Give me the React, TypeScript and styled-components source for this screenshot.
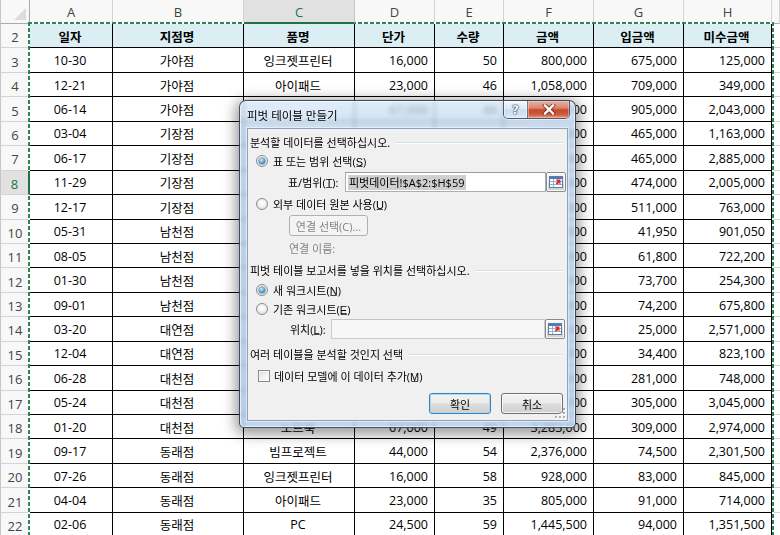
import React from "react";
import styled, { createGlobalStyle } from "styled-components";

const GlobalStyle = createGlobalStyle`
  html, body { margin: 0; padding: 0; background: #fff; }
  body {
    width: 780px; height: 535px; overflow: hidden;
    font-family: "Open Sans", "Noto Sans CJK KR", sans-serif;
  }
`;

const COLS = [30, 83, 131, 111, 80, 69, 90, 90, 88, 8];
const LETTERS = ["A", "B", "C", "D", "E", "F", "G", "H", ""];
const HEAD = ["일자", "지점명", "품명", "단가", "수량", "금액", "입금액", "미수금액"];
const ROWS: string[][] = [
  ["10-30", "가야점", "잉크젯프린터", "16,000", "50", "800,000", "675,000", "125,000"],
  ["12-21", "가야점", "아이패드", "23,000", "46", "1,058,000", "709,000", "349,000"],
  ["06-14", "가야점", "노트북", "67,000", "44", "2,948,000", "905,000", "2,043,000"],
  ["03-04", "기장점", "빔프로젝트", "44,000", "37", "1,628,000", "465,000", "1,163,000"],
  ["06-17", "기장점", "노트북", "67,000", "50", "3,350,000", "465,000", "2,885,000"],
  ["11-29", "기장점", "노트북", "67,000", "37", "2,479,000", "474,000", "2,005,000"],
  ["12-17", "기장점", "PC", "24,500", "52", "1,274,000", "511,000", "763,000"],
  ["05-31", "남천점", "아이패드", "23,000", "41", "943,000", "41,950", "901,050"],
  ["08-05", "남천점", "잉크젯프린터", "16,000", "49", "784,000", "61,800", "722,200"],
  ["01-30", "남천점", "마우스", "8,000", "41", "328,000", "73,700", "254,300"],
  ["09-01", "남천점", "키보드", "15,000", "50", "750,000", "74,200", "675,800"],
  ["03-20", "대연점", "빔프로젝트", "44,000", "59", "2,596,000", "25,000", "2,571,000"],
  ["12-04", "대연점", "PC", "24,500", "35", "857,500", "34,400", "823,100"],
  ["06-28", "대천점", "PC", "24,500", "42", "1,029,000", "281,000", "748,000"],
  ["05-24", "대천점", "노트북", "67,000", "50", "3,350,000", "305,000", "3,045,000"],
  ["01-20", "대천점", "노트북", "67,000", "49", "3,283,000", "309,000", "2,974,000"],
  ["09-17", "동래점", "빔프로젝트", "44,000", "54", "2,376,000", "74,500", "2,301,500"],
  ["07-26", "동래점", "잉크젯프린터", "16,000", "58", "928,000", "83,000", "845,000"],
  ["04-04", "동래점", "아이패드", "23,000", "35", "805,000", "91,000", "714,000"],
  ["02-06", "동래점", "PC", "24,500", "59", "1,445,500", "94,000", "1,351,500"],
];

/* cells that lie completely under the dialog's opaque panel are left blank */
const covered = (rowNum: number, ci: number) =>
  (rowNum >= 6 && rowNum <= 17 && ci >= 2 && ci <= 4) || (rowNum === 5 && ci === 2);

const GREEN = "#217346";
const U = "\u0332"; // combining low line: mnemonic underline inside one text run

/* ---------- sheet ---------- */
const Sheet = styled.div`
  position: relative;
  width: 780px;
  height: 535px;
  overflow: hidden;
  background: #fff;
`;

const Grid = styled.div`
  display: grid;
  grid-template-columns: ${COLS.map((c) => c + "px").join(" ")};
  grid-template-rows: 24px repeat(21, 24.45px);
`;

const Corner = styled.div`
  position: relative;
  box-sizing: border-box;
  background: #f8f8f8;
  border-right: 1px solid #ababab;
  border-bottom: 1px solid #ababab;
  border-left: 1px solid #c6c6c6;
  &::after {
    content: "";
    position: absolute;
    right: 3px;
    bottom: 3px;
    width: 0;
    height: 0;
    border-left: 12px solid transparent;
    border-bottom: 12px solid #dcdcdc;
  }
`;

const ColHead = styled.div<{ $sel?: boolean }>`
  position: relative;
  z-index: ${(p) => (p.$sel ? 3 : 0)};
  box-sizing: border-box;
  display: flex;
  align-items: center;
  justify-content: center;
  padding-top: 1px;
  background: ${(p) => (p.$sel ? "#e1e1e1" : "#f8f8f8")};
  color: ${(p) => (p.$sel ? GREEN : "#444")};
  border-right: 1px solid ${(p) => (p.$sel ? "#c6c6c6" : "#d4d4d4")};
  border-bottom: ${(p) => (p.$sel ? `2px solid ${GREEN}` : "1px solid #ababab")};
  font-size: 13px;
`;

const RowHead = styled.div<{ $sel?: boolean }>`
  position: relative;
  z-index: ${(p) => (p.$sel ? 3 : 0)};
  box-sizing: border-box;
  display: flex;
  align-items: center;
  justify-content: center;
  padding-top: 3px;
  background: ${(p) => (p.$sel ? "#e1e1e1" : "#f8f8f8")};
  color: ${(p) => (p.$sel ? GREEN : "#444")};
  border-left: 1px solid #c6c6c6;
  border-bottom: 1px solid #d4d4d4;
  border-right: ${(p) => (p.$sel ? `2px solid ${GREEN}` : "1px solid #ababab")};
  font-size: 13px;
`;

const Cell = styled.div<{ $align: "center" | "right"; $head?: boolean }>`
  box-sizing: border-box;
  display: flex;
  align-items: center;
  justify-content: ${(p) => (p.$align === "center" ? "center" : "flex-end")};
  padding: 1px 6px 0 4px;
  border-right: 1px solid #000;
  border-bottom: 1px solid #000;
  background: ${(p) => (p.$head ? "#daeef3" : "#fff")};
  font-weight: ${(p) => (p.$head ? 700 : 400)};
  font-size: 12.5px;
  color: #000;
  white-space: nowrap;
  overflow: hidden;
`;

const Spare = styled.div`
  box-sizing: border-box;
  border-bottom: 1px solid #d4d4d4;
`;

const Marquee = styled.div`
  position: absolute;
  left: 28px;
  top: 22px;
  width: 746px;
  height: 600px;
  z-index: 2;
  pointer-events: none;
  background:
    repeating-linear-gradient(90deg, #2f8354 0 4px, #ffffff 4px 6px) top left / 100% 2px no-repeat,
    repeating-linear-gradient(180deg, #2f8354 0 4px, #ffffff 4px 6px) top left / 2px 100% no-repeat,
    repeating-linear-gradient(180deg, #2f8354 0 4px, #ffffff 4px 6px) top right / 2px 100% no-repeat;
`;

/* ---------- dialog ---------- */
const Dialog = styled.div`
  position: absolute;
  left: 239px;
  top: 100px;
  width: 337px;
  height: 328px;
  z-index: 10;
  box-sizing: border-box;
  display: flex;
  flex-direction: column;
  padding: 0 7px 6px 7px;
  border: 1px solid rgba(25, 40, 60, 0.8);
  border-radius: 7px 7px 5px 5px;
  background: linear-gradient(
    180deg,
    rgba(212, 230, 248, 0.72) 0px,
    rgba(182, 208, 236, 0.7) 28px,
    rgba(176, 204, 234, 0.78) 100%
  );
  backdrop-filter: blur(2.5px);
  box-shadow: 0 3px 14px 3px rgba(0, 0, 0, 0.42), inset 0 0 0 1px rgba(255, 255, 255, 0.6);
  font-family: "Open Sans", "Noto Sans CJK KR", sans-serif;
  font-size: 11px;
  color: #000;
`;

const TitleBar = styled.div`
  height: 27px;
  display: flex;
  align-items: flex-start;
`;

const Title = styled.div`
  margin-top: 6px;
  line-height: 18px;
  font-size: 11.5px;
  color: #000;
  text-shadow: 0 0 6px rgba(255, 255, 255, 0.9);
`;

const Caption = styled.div`
  display: flex;
  margin-left: auto;
  margin-right: -2px;
  height: 18px;
  box-sizing: border-box;
  border: 1px solid rgba(35, 45, 65, 0.75);
  border-top: none;
  border-radius: 0 0 5px 5px;
  overflow: hidden;
  box-shadow: 0 1px 0 rgba(255, 255, 255, 0.55);
`;

const HelpBtn = styled.div`
  width: 24px;
  box-sizing: border-box;
  border-right: 1px solid rgba(35, 45, 65, 0.6);
  display: flex;
  align-items: center;
  justify-content: center;
  background: linear-gradient(
    180deg,
    rgba(255, 255, 255, 0.65) 0%,
    rgba(220, 232, 245, 0.55) 48%,
    rgba(190, 210, 232, 0.55) 52%,
    rgba(220, 235, 248, 0.7) 100%
  );
  box-shadow: inset 0 0 0 1px rgba(255, 255, 255, 0.5);
  color: #f6f9fc;
  font: bold 12px "DejaVu Sans", sans-serif;
  text-shadow: 0 0 1px #2a3a50, 0 0 1px #2a3a50, 0 0 2px #2a3a50;
`;

const CloseBtn = styled.div`
  width: 41px;
  display: flex;
  align-items: center;
  justify-content: center;
  background: linear-gradient(
    180deg,
    #eab0a2 0%,
    #d98571 42%,
    #c7472c 52%,
    #cf5a3e 78%,
    #e39a80 100%
  );
  box-shadow: inset 0 0 0 1px rgba(255, 220, 210, 0.45);
`;

const Body = styled.div`
  position: relative;
  flex: 1;
  box-sizing: border-box;
  display: flex;
  flex-direction: column;
  padding: 4px 4px 0 0;
  background: #f0f0f0;
  border: 1px solid #8ea3bb;
  box-shadow: 0 0 0 1px rgba(255, 255, 255, 0.45);
`;

const Section = styled.div<{ $h: number }>`
  height: ${(p) => p.$h}px;
  display: flex;
  align-items: center;
  gap: 5px;
  padding-left: 2px;
  white-space: nowrap;
  &::after {
    content: "";
    flex: 1;
    height: 1px;
    background: #d5dfe5;
    box-shadow: 0 1px 0 #fff;
  }
`;

const Line = styled.div<{ $h: number; $indent: number; $muted?: boolean }>`
  height: ${(p) => p.$h}px;
  display: flex;
  align-items: center;
  padding-left: ${(p) => p.$indent}px;
  white-space: nowrap;
  color: ${(p) => (p.$muted ? "#838383" : "#000")};
`;

const RadioMark = styled.span<{ $on?: boolean }>`
  position: relative;
  flex: none;
  width: 12px;
  height: 12px;
  margin-right: 5px;
  box-sizing: border-box;
  border-radius: 50%;
  border: 1px solid #8c8c8c;
  background: radial-gradient(circle at 50% 40%, #ffffff 0%, #f1f1f1 45%, #d6d6d6 100%);
  &::after {
    content: "";
    display: ${(p) => (p.$on ? "block" : "none")};
    position: absolute;
    left: 2px;
    top: 2px;
    width: 6px;
    height: 6px;
    border-radius: 50%;
    background: radial-gradient(circle at 40% 35%, #d6efff 0%, #61aee0 45%, #1c5a8c 100%);
    box-shadow: 0 0 0 0.5px #2d5f86;
  }
`;

const CheckMark = styled.span`
  flex: none;
  width: 12px;
  height: 12px;
  margin-right: 4px;
  box-sizing: border-box;
  border: 1px solid #8c8c8c;
  background: linear-gradient(135deg, #dcdcdc 0%, #f4f4f4 60%, #ffffff 100%);
  box-shadow: inset 0 0 0 1px #f6f6f6;
`;

const FieldLabel = styled.span<{ $w: number }>`
  width: ${(p) => p.$w}px;
  flex: none;
`;

const TextBox = styled.div<{ $w: number; $disabled?: boolean }>`
  width: ${(p) => p.$w}px;
  height: 20px;
  flex: none;
  box-sizing: border-box;
  display: flex;
  align-items: center;
  padding-left: 2px;
  border: 1px solid ${(p) => (p.$disabled ? "#c9ccd2" : "#abadb3")};
  border-top-color: ${(p) => (p.$disabled ? "#bfc2c8" : "#9a9ca3")};
  background: ${(p) => (p.$disabled ? "#f6f6f6" : "#fff")};
`;

const Selected = styled.span`
  background: #cfcfcf;
  line-height: 15px;
  padding: 0 1px;
`;

const PickBtn = styled.div`
  width: 20px;
  height: 20px;
  flex: none;
  box-sizing: border-box;
  display: flex;
  align-items: center;
  justify-content: center;
  border: 1px solid #8a8a8a;
  border-radius: 2px;
  background: linear-gradient(180deg, #f6f6f6 0%, #e9e9e9 50%, #dcdcdc 51%, #d2d2d2 100%);
  box-shadow: inset 0 0 0 1px rgba(255, 255, 255, 0.8);
`;

const PushBtn = styled.div<{ $w: number; $default?: boolean; $disabled?: boolean }>`
  width: ${(p) => p.$w}px;
  height: 21px;
  flex: none;
  box-sizing: border-box;
  display: flex;
  align-items: center;
  justify-content: center;
  border-radius: 3px;
  border: 1px solid
    ${(p) => (p.$disabled ? "#adb2b5" : p.$default ? "#3c7fb1" : "#707070")};
  background: ${(p) =>
    p.$disabled
      ? "#f4f4f4"
      : "linear-gradient(180deg, #f2f2f2 0%, #ebebeb 48%, #dddddd 52%, #cfcfcf 100%)"};
  box-shadow: ${(p) =>
    p.$default
      ? "inset 0 0 0 1px #a9dcf7"
      : p.$disabled
      ? "none"
      : "inset 0 0 0 1px rgba(255,255,255,0.75)"};
  color: ${(p) => (p.$disabled ? "#838383" : "#000")};
`;

const ButtonRow = styled.div`
  display: flex;
  justify-content: flex-end;
  gap: 10px;
  margin-top: 9px;
`;

const Grip = styled.svg`
  position: absolute;
  right: 1px;
  bottom: 1px;
`;

function PickIcon() {
  return (
    <svg width="14" height="12" viewBox="0 0 14 12">
      <rect x="0.5" y="0.5" width="13" height="11" fill="#fff" stroke="#5d7ca6" />
      <rect x="1" y="1" width="12" height="2" fill="#4f7ab5" />
      <path d="M1 5.5h12M1 8.5h12" stroke="#8fb0da" />
      <path d="M4.5 3v8" stroke="#8fb0da" />
      <path d="M6.5 3.5 L11.5 3.5 L11.5 8.5 L10 7 L8.2 8.8 L6.7 7.3 L8.5 5.5 Z" fill="#dd2b22" />
    </svg>
  );
}

function CloseIcon() {
  return (
    <svg width="14" height="11" viewBox="0 0 14 11">
      <path d="M3 1.5 L11 9.5 M11 1.5 L3 9.5" stroke="#5a2418" strokeWidth="4.2" strokeLinecap="square" opacity="0.7" />
      <path d="M3 1.5 L11 9.5 M11 1.5 L3 9.5" stroke="#ffffff" strokeWidth="2.4" strokeLinecap="square" />
    </svg>
  );
}

function PivotDialog() {
  return (
    <Dialog>
      <TitleBar>
        <Title>피벗 테이블 만들기</Title>
        <Caption>
          <HelpBtn>?</HelpBtn>
          <CloseBtn>
            <CloseIcon />
          </CloseBtn>
        </Caption>
      </TitleBar>
      <Body>
        <Section $h={18}>분석할 데이터를 선택하십시오.</Section>
        <Line $h={20} $indent={8}>
          <RadioMark $on />
          {`표 또는 범위 선택(S${U})`}
        </Line>
        <Line $h={22} $indent={40}>
          <FieldLabel $w={57}>{`표/범위(T${U}):`}</FieldLabel>
          <TextBox $w={201}>
            <Selected>피벗데이터!$A$2:$H$59</Selected>
          </TextBox>
          <PickBtn>
            <PickIcon />
          </PickBtn>
        </Line>
        <Line $h={22} $indent={8}>
          <RadioMark />
          {`외부 데이터 원본 사용(U${U})`}
        </Line>
        <Line $h={21} $indent={41}>
          <PushBtn $w={79} $disabled>
            연결 선택(C)...
          </PushBtn>
        </Line>
        <Line $h={24} $indent={41} $muted>
          연결 이름:
        </Line>
        <Section $h={20}>피벗 테이블 보고서를 넣을 위치를 선택하십시오.</Section>
        <Line $h={19} $indent={8}>
          <RadioMark $on />
          {`새 워크시트(N${U})`}
        </Line>
        <Line $h={19} $indent={8}>
          <RadioMark />
          {`기존 워크시트(E${U})`}
        </Line>
        <Line $h={22} $indent={42}>
          <FieldLabel $w={41}>{`위치(L${U}):`}</FieldLabel>
          <TextBox $w={214} $disabled />
          <PickBtn>
            <PickIcon />
          </PickBtn>
        </Line>
        <Section $h={28}>여러 테이블을 분석할 것인지 선택</Section>
        <Line $h={16} $indent={10}>
          <CheckMark />
          {`데이터 모델에 이 데이터 추가(M${U})`}
        </Line>
        <ButtonRow>
          <PushBtn $w={62} $default>
            확인
          </PushBtn>
          <PushBtn $w={62}>취소</PushBtn>
        </ButtonRow>
        <Grip width="11" height="11" viewBox="0 0 11 11">
          {[
            [8, 0],
            [8, 4],
            [4, 4],
            [8, 8],
            [4, 8],
            [0, 8],
          ].map(([x, y], i) => (
            <g key={i}>
              <rect x={x + 1} y={y + 1} width="2" height="2" fill="#ffffff" />
              <rect x={x} y={y} width="2" height="2" fill="#a8b0b8" />
            </g>
          ))}
        </Grip>
      </Body>
    </Dialog>
  );
}

export default function App() {
  return (
    <>
      <GlobalStyle />
      <Sheet>
        <Grid>
          <Corner />
          {LETTERS.map((l, i) => (
            <ColHead key={i} $sel={l === "C"}>
              {l}
            </ColHead>
          ))}
          <RowHead>2</RowHead>
          {HEAD.map((h, i) => (
            <Cell key={i} $align="center" $head>
              {h}
            </Cell>
          ))}
          <Spare />
          {ROWS.map((r, ri) => {
            const rowNum = ri + 3;
            return (
              <React.Fragment key={ri}>
                <RowHead $sel={rowNum === 8}>{rowNum}</RowHead>
                {r.map((v, ci) => (
                  <Cell key={ci} $align={ci < 3 ? "center" : "right"}>
                    {covered(rowNum, ci) ? "" : v}
                  </Cell>
                ))}
                <Spare />
              </React.Fragment>
            );
          })}
        </Grid>
        <Marquee />
        <PivotDialog />
      </Sheet>
    </>
  );
}
